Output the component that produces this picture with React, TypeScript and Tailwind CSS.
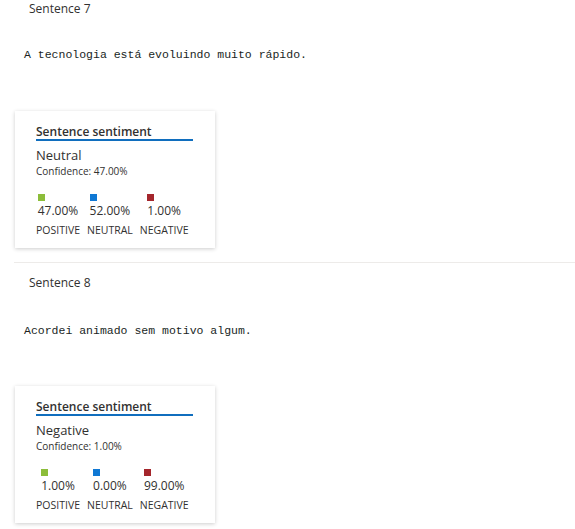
const sentences = [
  {
    n: 7,
    text: 'A tecnologia está evoluindo muito rápido.',
    label: 'Neutral',
    confidence: '47.00%',
    scores: ['47.00%', '52.00%', '1.00%'],
  },
  {
    n: 8,
    text: 'Acordei animado sem motivo algum.',
    label: 'Negative',
    confidence: '1.00%',
    scores: ['1.00%', '0.00%', '99.00%'],
  },
];

const cols = [
  { name: 'POSITIVE', color: 'bg-[#8cbd3a]' },
  { name: 'NEUTRAL', color: 'bg-[#0f78d4]' },
  { name: 'NEGATIVE', color: 'bg-[#a4262c]' },
];

function SentimentCard({ label, confidence, scores }: { label: string; confidence: string; scores: string[] }) {
  return (
    <div className="ml-[15px] w-[200px] h-[137px] bg-white shadow-[0_1px_4px_rgba(0,0,0,0.2)] pl-[21px] pt-[13px]">
      <div className="w-[157px] border-b-2 border-[#106ebe] text-[12px] font-semibold text-[#323130] leading-[15px]">
        Sentence sentiment
      </div>
      <div className="mt-[6px] text-[13px] text-[#323130] leading-[17px]">{label}</div>
      <div className="mt-[1px] text-[10px] text-[#323130] leading-[13px]">Confidence: {confidence}</div>
      <div className="flex mt-[16px] gap-[7px]">
        {cols.map((c, i) => (
          <div key={c.name} className="flex flex-col items-center">
            <div className="flex flex-col items-start">
              <div className={`w-[7px] h-[7px] ${c.color}`}></div>
              <div className="text-[12px] text-[#323130] leading-[16px] mt-[2px]">{scores[i]}</div>
            </div>
            <div className="text-[10.5px] text-[#323130] leading-[13px] mt-[5px]">{c.name}</div>
          </div>
        ))}
      </div>
    </div>
  );
}

export default function App() {
  return (
    <div className="w-[575px] h-[529px] bg-white overflow-hidden font-['Open_Sans',sans-serif] text-[#323130]">
      {sentences.map((s, i) => (
        <div key={s.n} className={i > 0 ? 'border-t border-[#edebe9] ml-[14px]' : ''}>
          <div className={i > 0 ? '-ml-[14px]' : ''}>
            <div className={`pl-[29px] text-[12px] leading-[16px] ${i > 0 ? 'pt-[12px]' : 'pt-[1px]'}`}>Sentence {s.n}</div>
            <div className={`pl-[24px] font-['Liberation_Mono',monospace] text-[11.5px] leading-[15px] text-[#201f1e] ${i > 0 ? 'mt-[32px]' : 'mt-[30px]'}`}>
              {s.text}
            </div>
            <div className={`pb-[14px] ${i > 0 ? 'mt-[48px]' : 'mt-[49px]'}`}>
              <SentimentCard label={s.label} confidence={s.confidence} scores={s.scores} />
            </div>
          </div>
        </div>
      ))}
    </div>
  );
}
